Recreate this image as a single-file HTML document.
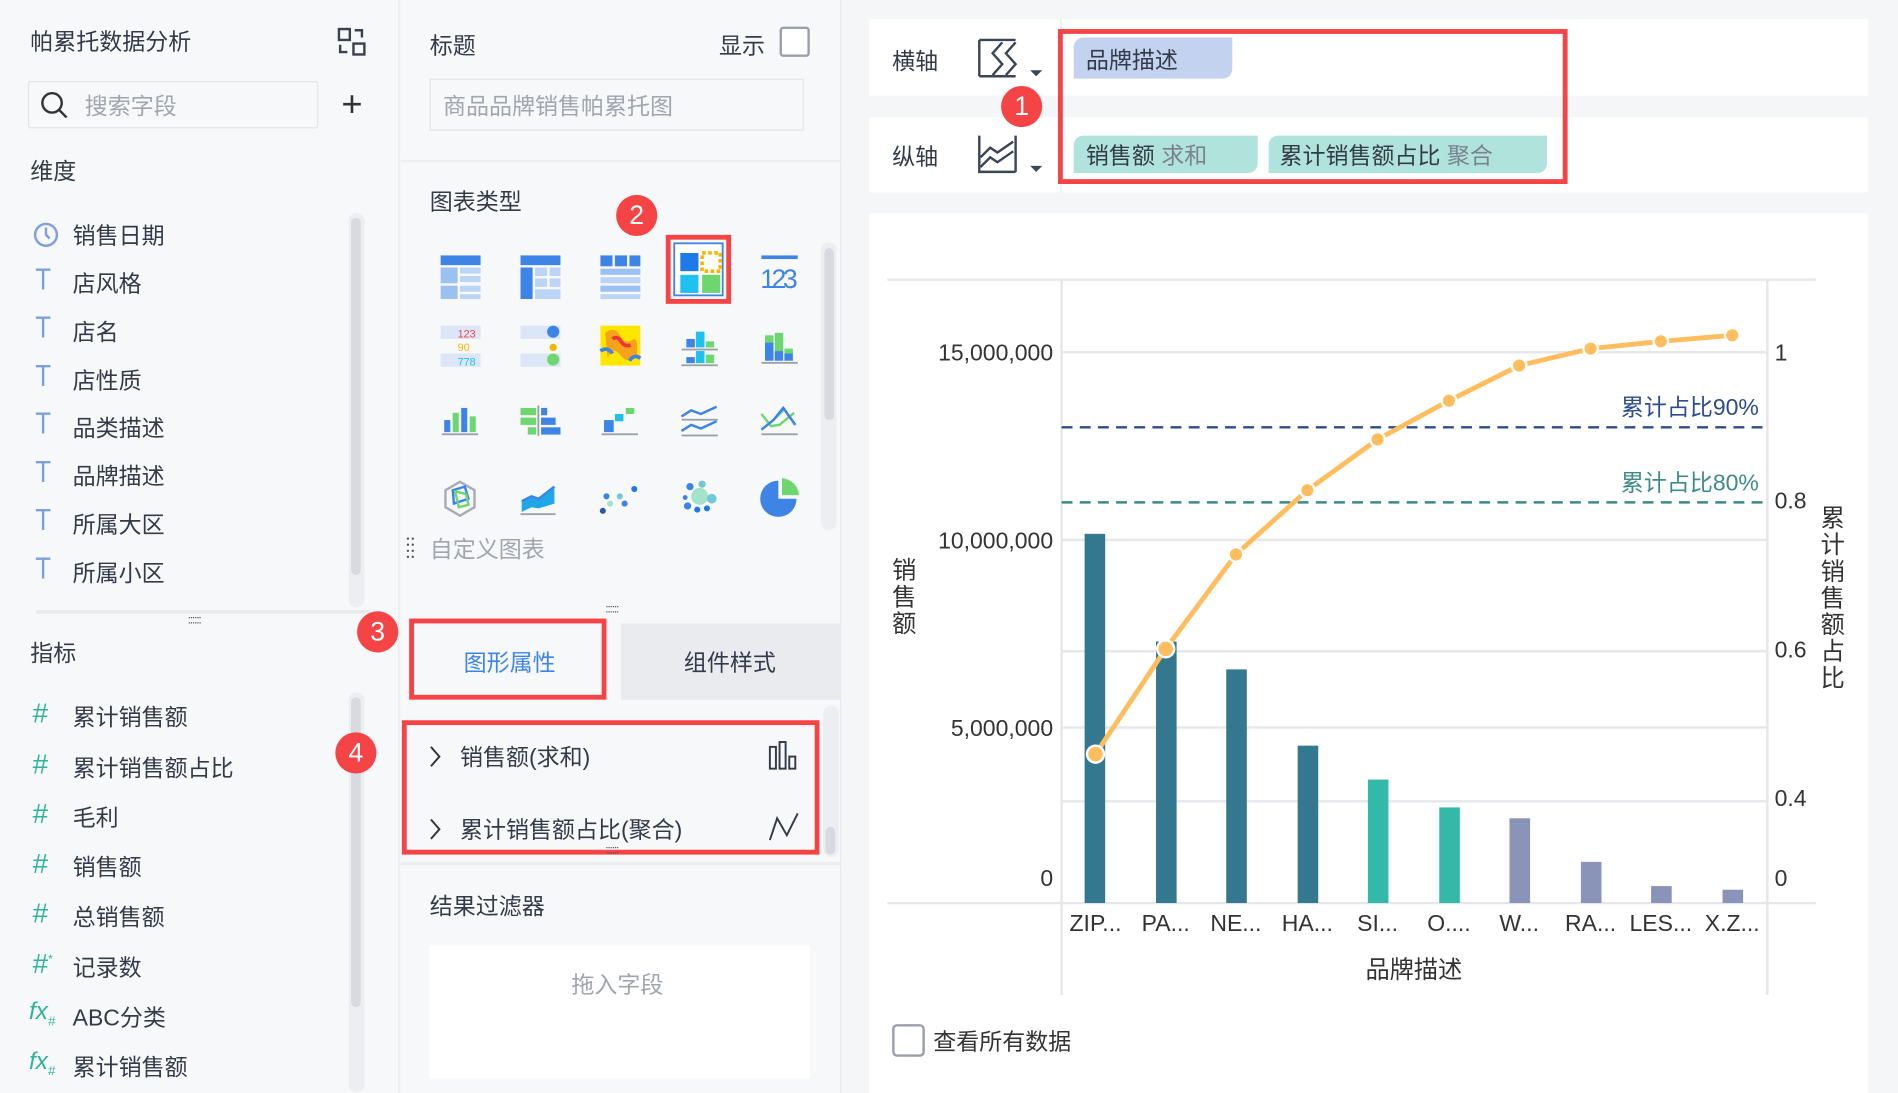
<!DOCTYPE html>
<html><head><meta charset="utf-8"><style>
*{margin:0;padding:0;box-sizing:border-box}
body{width:1898px;height:1093px;overflow:hidden;background:#f5f6f8;font-family:"Liberation Sans","Noto Sans CJK SC",sans-serif;color:#333a48}
#w{width:1568px;height:903px;transform:scale(1.2105);transform-origin:0 0;position:relative}
.a{position:absolute}
.t{font-size:19px;white-space:nowrap;margin-top:-2px}
.badge{position:absolute;width:34px;height:34px;border-radius:50%;background:#f44446;color:#fff;font-size:22px;text-align:center;line-height:34px}
.red{position:absolute;border:4px solid #f44446}
.ic{position:absolute;font-size:25px;color:#7f9ee0;left:28px;margin-top:-4px;transform:scaleX(.85)}
.ih{position:absolute;font-size:23px;color:#2fb39a;left:27px;margin-top:-3px}
</style></head><body><div id="w">
<!-- left panel -->
<div class="a" style="left:0;top:0;width:330px;height:903px;background:#f7f8fa;border-right:1px solid #e6e8eb"></div>
<div class="a t" style="left:25px;top:22px">帕累托数据分析</div>
<svg class="a" style="left:278px;top:22px" width="26" height="26" viewBox="0 0 26 26" fill="none" stroke="#3a4150" stroke-width="2"><rect x="2" y="2" width="9" height="9"/><rect x="14" y="14" width="9" height="9"/><path d="M15 3h6v6M3 15v6h6"/></svg>
<div class="a" style="left:23px;top:67px;width:240px;height:39px;border:1px solid #e2e4e8;border-radius:2px;background:#f7f8fa"></div>
<svg class="a" style="left:32px;top:74px" width="26" height="26" viewBox="0 0 26 26" fill="none" stroke="#333" stroke-width="2"><circle cx="11" cy="11" r="8"/><path d="M17 17l6 6"/></svg>
<div class="a t" style="left:70px;top:75px;color:#a0a5ae">搜索字段</div>
<div class="a" style="left:282px;top:70px;font-size:30px;color:#333;font-weight:300">+</div>
<div class="a t" style="left:25px;top:129px">维度</div>
<div class="a" style="left:288px;top:176px;width:13px;height:326px;border-radius:7px;background:#eceef1"></div>
<div class="a" style="left:290px;top:180px;width:8px;height:295px;border-radius:4px;background:#d8dadf"></div>
<svg class="a" style="left:27px;top:183px" width="22" height="22" viewBox="0 0 22 22" fill="none" stroke="#7f9ee0" stroke-width="2"><circle cx="11" cy="11" r="9"/><path d="M11 5v6l3 3"/></svg>
<div class="a t" style="left:60px;top:182px">销售日期</div>
<div class="ic" style="top:221px">T</div><div class="a t" style="left:60px;top:222px">店风格</div>
<div class="ic" style="top:261px">T</div><div class="a t" style="left:60px;top:262px">店名</div>
<div class="ic" style="top:301px">T</div><div class="a t" style="left:60px;top:302px">店性质</div>
<div class="ic" style="top:340px">T</div><div class="a t" style="left:60px;top:341px">品类描述</div>
<div class="ic" style="top:380px">T</div><div class="a t" style="left:60px;top:381px">品牌描述</div>
<div class="ic" style="top:420px">T</div><div class="a t" style="left:60px;top:421px">所属大区</div>
<div class="ic" style="top:460px">T</div><div class="a t" style="left:60px;top:461px">所属小区</div>
<div class="a" style="left:30px;top:504px;width:276px;height:3px;background:#e8eaed"></div>
<div class="a" style="left:155px;top:507px;font-size:10px;color:#555;letter-spacing:-1px">::::::</div>
<div class="a t" style="left:25px;top:527px">指标</div>
<div class="a" style="left:288px;top:572px;width:13px;height:330px;border-radius:7px;background:#eceef1"></div>
<div class="a" style="left:290px;top:576px;width:8px;height:256px;border-radius:4px;background:#d8dadf"></div>
<div class="ih" style="top:579px">#</div><div class="a t" style="left:60px;top:580px">累计销售额</div>
<div class="ih" style="top:621px">#</div><div class="a t" style="left:60px;top:622px">累计销售额占比</div>
<div class="ih" style="top:662px">#</div><div class="a t" style="left:60px;top:663px">毛利</div>
<div class="ih" style="top:703px">#</div><div class="a t" style="left:60px;top:704px">销售额</div>
<div class="ih" style="top:744px">#</div><div class="a t" style="left:60px;top:745px">总销售额</div>
<div class="ih" style="top:786px">#<sup style="font-size:10px">*</sup></div><div class="a t" style="left:60px;top:787px">记录数</div>
<div class="ih" style="top:828px;left:24px;font-size:20px;font-style:italic">fx<sub style="font-size:11px">#</sub></div><div class="a t" style="left:60px;top:828px">ABC分类</div>
<div class="ih" style="top:869px;left:24px;font-size:20px;font-style:italic">fx<sub style="font-size:11px">#</sub></div><div class="a t" style="left:60px;top:869px">累计销售额</div>

<!-- middle panel -->
<div class="a" style="left:331px;top:0;width:364px;height:903px;background:#f7f8fa;border-right:1px solid #e6e8eb"></div>
<div class="a t" style="left:355px;top:25px">标题</div>
<div class="a t" style="left:594px;top:25px">显示</div>
<div class="a" style="left:644px;top:22px;width:25px;height:25px;border:2px solid #9aa0aa;border-radius:3px;background:#fff"></div>
<div class="a" style="left:355px;top:65px;width:309px;height:43px;border:1px solid #e2e4e8;background:#f7f8fa"></div>
<div class="a t" style="left:366px;top:75px;color:#a0a5ae">商品品牌销售帕累托图</div>
<div class="a" style="left:331px;top:132px;width:364px;height:2px;background:#eceef1"></div>
<div class="a t" style="left:355px;top:154px">图表类型</div>
<div class="a" style="left:678px;top:200px;width:13px;height:238px;border-radius:7px;background:#eceef1"></div>
<div class="a" style="left:681px;top:205px;width:8px;height:142px;border-radius:4px;background:#d8dadf"></div>
<svg class="a" style="left:355px;top:190px" width="320" height="250" viewBox="355 190 320 250">
<rect x="364" y="211" width="33" height="8" fill="#3d84e6"/><rect x="364" y="221" width="14" height="13" fill="#9bc1f3"/><rect x="380" y="221" width="17" height="5" fill="#bcd5f6"/><rect x="380" y="228" width="17" height="5" fill="#bcd5f6"/><rect x="364" y="236" width="14" height="11" fill="#9bc1f3"/><rect x="380" y="236" width="17" height="5" fill="#bcd5f6"/><rect x="380" y="243" width="17" height="4" fill="#bcd5f6"/>
<rect x="430" y="211" width="33" height="8" fill="#3d84e6"/><rect x="430" y="221" width="10" height="26" fill="#3d84e6"/><rect x="442" y="221" width="10" height="7" fill="#bcd5f6"/><rect x="454" y="221" width="9" height="7" fill="#bcd5f6"/><rect x="442" y="230" width="10" height="7" fill="#bcd5f6"/><rect x="454" y="230" width="9" height="7" fill="#bcd5f6"/><rect x="442" y="239" width="21" height="8" fill="#bcd5f6"/>
<rect x="496" y="211" width="10" height="9" fill="#3d84e6"/><rect x="508" y="211" width="10" height="9" fill="#3d84e6"/><rect x="520" y="211" width="9" height="9" fill="#3d84e6"/><rect x="496" y="222" width="33" height="5" fill="#9bc1f3"/><rect x="496" y="229" width="33" height="5" fill="#bcd5f6"/><rect x="496" y="236" width="33" height="5" fill="#9bc1f3"/><rect x="496" y="243" width="33" height="4" fill="#bcd5f6"/>
<rect x="552" y="196" width="50" height="53" fill="none" stroke="#f44446" stroke-width="4"/><rect x="557" y="201" width="40" height="43" fill="#fff" stroke="#3d84e6" stroke-width="1.5"/>
<rect x="562" y="209" width="15" height="15" fill="#1e7ae8"/><rect x="580" y="209" width="15" height="15" fill="none" stroke="#f7b500" stroke-width="3" stroke-dasharray="3 2"/><rect x="562" y="227" width="15" height="15" fill="#1fc1f0"/><rect x="580" y="227" width="15" height="15" fill="#6dd66f"/>
<rect x="629" y="211" width="30" height="3" fill="#3d84e6"/><text x="628" y="238" font-size="22" fill="#3d84e6" font-family="Liberation Sans" textLength="31">123</text>
<rect x="364" y="269" width="33" height="11" fill="#dbe6f6"/><text x="378" y="279" font-size="9" fill="#f44446">123</text><text x="378" y="290" font-size="9" fill="#f7b500">90</text><rect x="364" y="292" width="33" height="11" fill="#dbe6f6"/><text x="378" y="302" font-size="9" fill="#1fc1f0">778</text>
<rect x="430" y="269" width="33" height="11" fill="#dbe6f6"/><circle cx="457" cy="274" r="5" fill="#3d84e6"/><circle cx="457" cy="287" r="3" fill="#f7b500"/><rect x="430" y="292" width="33" height="11" fill="#dbe6f6"/><circle cx="457" cy="297" r="5" fill="#6dd66f"/>
<rect x="496" y="269" width="33" height="33" fill="#ffe600"/><path d="M500 275q8-6 12 2t10 4 4 14q-8 6-14-2t-10 3z" fill="#f7a21b"/><path d="M506 280q4-3 7 2t8 3" stroke="#e33" stroke-width="3" fill="none"/><path d="M496 290q6-4 10 2M520 298q4-6 9-2" stroke="#3d84e6" stroke-width="3" fill="none"/>
<rect x="567" y="280" width="7" height="7" fill="#3d84e6"/><rect x="575" y="274" width="7" height="13" fill="#1fc1f0"/><rect x="583" y="282" width="7" height="5" fill="#6dd66f"/><rect x="563" y="288" width="30" height="1.5" fill="#9aa0aa"/><rect x="567" y="295" width="7" height="5" fill="#3d84e6"/><rect x="575" y="290" width="7" height="10" fill="#1fc1f0"/><rect x="583" y="293" width="7" height="7" fill="#6dd66f"/><rect x="563" y="301" width="30" height="1.5" fill="#9aa0aa"/>
<rect x="632" y="283" width="7" height="15" fill="#3d84e6"/><rect x="632" y="277" width="7" height="6" fill="#6dd66f"/><rect x="640" y="290" width="7" height="8" fill="#3d84e6"/><rect x="640" y="275" width="7" height="15" fill="#6dd66f"/><rect x="648" y="292" width="7" height="6" fill="#3d84e6"/><rect x="648" y="288" width="7" height="4" fill="#6dd66f"/><rect x="629" y="299" width="30" height="1.5" fill="#9aa0aa"/>
<rect x="367" y="347" width="5" height="10" fill="#3d84e6"/><rect x="374" y="341" width="5" height="16" fill="#6dd66f"/><rect x="381" y="337" width="5" height="20" fill="#3d84e6"/><rect x="388" y="344" width="5" height="13" fill="#6dd66f"/><rect x="365" y="358" width="30" height="1.5" fill="#9aa0aa"/>
<rect x="430" y="337" width="13" height="6" fill="#6dd66f"/><rect x="430" y="345" width="13" height="6" fill="#6dd66f"/><rect x="436" y="353" width="7" height="6" fill="#6dd66f"/><rect x="444" y="335" width="1.5" height="25" fill="#9aa0aa"/><rect x="447" y="337" width="5" height="6" fill="#3d84e6"/><rect x="447" y="345" width="12" height="6" fill="#3d84e6"/><rect x="447" y="353" width="16" height="6" fill="#3d84e6"/>
<rect x="499" y="347" width="8" height="10" fill="#3d84e6"/><rect x="508" y="342" width="7" height="6" fill="#1fc1f0"/><rect x="517" y="337" width="7" height="5" fill="#6dd66f"/><rect x="497" y="358" width="30" height="1.5" fill="#9aa0aa"/>
<path d="M563 344l8-5 8 3 13-6M563 356l8-5 8 3 13-6" stroke="#3d84e6" stroke-width="2" fill="none"/><rect x="563" y="346" width="30" height="1.5" fill="#9aa0aa"/><rect x="563" y="359" width="30" height="1.5" fill="#9aa0aa"/>
<path d="M629 342l8 10 7-1 12-10M629 355l12-10 7-7 9 13" stroke-width="2" fill="none" stroke="#6dd66f"/><path d="M629 355l10-8 8-10 10 14" stroke="#3d84e6" stroke-width="2" fill="none"/><rect x="629" y="358" width="30" height="1.5" fill="#9aa0aa"/>
<path d="M380 398l12 7v14l-12 7-12-7v-14z" fill="none" stroke="#a8adb5" stroke-width="2"/><path d="M374 405l10-3 3 10-12 4z" fill="none" stroke="#3d84e6" stroke-width="2"/><path d="M376 406l9 2 2 9-8 2z" fill="none" stroke="#6dd66f" stroke-width="2"/>
<path d="M431 414l8-4 6 2 13-10v14l-13 4-6-1-8 4z" fill="#1fa7e8"/><path d="M431 414l8-4 6 2 13-10" stroke="#3d84e6" stroke-width="2" fill="none"/><rect x="430" y="424" width="29" height="1.5" fill="#9aa0aa"/>
<circle cx="498" cy="422" r="2.5" fill="#2f55a8"/><circle cx="504" cy="416" r="2.5" fill="#a4e2c9"/><circle cx="501" cy="410" r="2.5" fill="#3d84e6"/><circle cx="512" cy="410" r="2.5" fill="#72c8d6"/><circle cx="516" cy="416" r="2.5" fill="#3d84e6"/><circle cx="524" cy="404" r="2.5" fill="#1e7ae8"/>
<circle cx="578" cy="410" r="7" fill="#a4e2c9"/><circle cx="570" cy="402" r="3" fill="#3d84e6"/><circle cx="580" cy="400" r="3" fill="#72c8d6"/><circle cx="588" cy="412" r="4" fill="#72c8d6"/><circle cx="566" cy="411" r="2" fill="#3d84e6"/><circle cx="568" cy="418" r="3" fill="#3d84e6"/><circle cx="576" cy="421" r="2.5" fill="#1e7ae8"/><circle cx="584" cy="420" r="2.5" fill="#1e7ae8"/>
<path d="M643 397a15 15 0 1 0 15 15h-15z" fill="#3d84e6"/><path d="M646 395a15 15 0 0 1 14 14h-14z" fill="#6dd66f"/>
</svg>
<svg class="a" style="left:335px;top:443px" width="8" height="20"><g fill="#555"><circle cx="2" cy="2" r="1"/><circle cx="6" cy="2" r="1"/><circle cx="2" cy="7" r="1"/><circle cx="6" cy="7" r="1"/><circle cx="2" cy="12" r="1"/><circle cx="6" cy="12" r="1"/><circle cx="2" cy="17" r="1"/><circle cx="6" cy="17" r="1"/></g></svg>
<div class="a t" style="left:355px;top:441px;color:#a0a5ae">自定义图表</div>
<div class="a" style="left:500px;top:498px;font-size:10px;color:#555;letter-spacing:-1px">::::::</div>
<div class="a" style="left:513px;top:515px;width:182px;height:63px;background:#eaebef"></div>
<div class="a" style="left:338px;top:511px;width:163px;height:67px;border:4px solid #f44446;background:#f7f8fa"></div>
<div class="a t" style="left:383px;top:535px;color:#3d84e6">图形属性</div>
<div class="a t" style="left:565px;top:535px">组件样式</div>
<div class="a" style="left:680px;top:583px;width:13px;height:125px;border-radius:7px;background:#eceef1"></div>
<div class="a" style="left:682px;top:683px;width:8px;height:23px;border-radius:4px;background:#d8dadf"></div>
<div class="red" style="left:332px;top:595px;width:345px;height:111px"></div>
<svg class="a" style="left:352px;top:614px" width="14" height="22" viewBox="0 0 14 22" fill="none" stroke="#333" stroke-width="1.6"><path d="M4 3l7 8-7 8"/></svg>
<div class="a t" style="left:380px;top:613px">销售额(求和)</div>
<svg class="a" style="left:634px;top:611px" width="28" height="26" viewBox="0 0 28 26" fill="none" stroke="#333a48" stroke-width="1.6"><rect x="2" y="6" width="5" height="18"/><rect x="10" y="2" width="5" height="22"/><rect x="18" y="14" width="5" height="10"/></svg>
<svg class="a" style="left:352px;top:674px" width="14" height="22" viewBox="0 0 14 22" fill="none" stroke="#333" stroke-width="1.6"><path d="M4 3l7 8-7 8"/></svg>
<div class="a t" style="left:380px;top:673px">累计销售额占比(聚合)</div>
<svg class="a" style="left:634px;top:670px" width="28" height="26" viewBox="0 0 28 26" fill="none" stroke="#333a48" stroke-width="1.6"><path d="M2 24l6-18 8 14 9-18"/></svg>
<div class="a" style="left:500px;top:697px;font-size:10px;color:#555;letter-spacing:-1px">::::::</div>
<div class="a" style="left:331px;top:712px;width:364px;height:3px;background:#eceef1"></div>
<div class="a t" style="left:355px;top:736px">结果过滤器</div>
<div class="a" style="left:355px;top:781px;width:314px;height:110px;background:#fff"></div>
<div class="a t" style="left:472px;top:801px;color:#a0a5ae">拖入字段</div>

<!-- right -->
<div class="a" style="left:718px;top:16px;width:825px;height:63px;background:#fff"></div>
<div class="a" style="left:718px;top:97px;width:825px;height:62px;background:#fff"></div>
<div class="a" style="left:876px;top:16px;width:1px;height:143px;background:#e6e8eb"></div>
<div class="a t" style="left:737px;top:38px">横轴</div>
<div class="a t" style="left:737px;top:117px">纵轴</div>
<svg class="a" style="left:806px;top:30px" width="58" height="120" viewBox="0 0 58 120" fill="none" stroke="#3a4558" stroke-width="2"><path d="M3 3v30M3 3h30M3 33h30M22 5l-8 9 8 9-8 9M33 5l-8 9 8 9-8 9"/><path d="M45 28h10l-5 5z" fill="#3a4558" stroke="none"/><path d="M3 82v30h30M33 82v30M4 100l8-8 6 4 13-9M4 108l8-8 6 4 13-9"/><path d="M45 107h10l-5 5z" fill="#3a4558" stroke="none"/></svg>
<div class="badge" style="left:827px;top:71px">1</div>
<div class="red" style="left:874px;top:24px;width:421px;height:128px"></div>
<div class="a" style="left:887px;top:31px;width:131px;height:34px;background:#c3d2ef;border-radius:8px 0 8px 0"></div>
<div class="a t" style="left:897px;top:37px">品牌描述</div>
<div class="a" style="left:887px;top:112px;width:152px;height:31px;background:#afe3dc;border-radius:8px 0 8px 0"></div>
<div class="a t" style="left:897px;top:116px">销售额 <span style="color:#7a8290">求和</span></div>
<div class="a" style="left:1048px;top:112px;width:230px;height:31px;background:#afe3dc;border-radius:8px 0 8px 0"></div>
<div class="a t" style="left:1057px;top:116px">累计销售额占比 <span style="color:#7a8290">聚合</span></div>

<div class="a" style="left:718px;top:176px;width:825px;height:727px;background:#fff"></div>
<svg class="a" style="left:718px;top:176px" width="825" height="727" viewBox="718 176 825 727" font-family="Liberation Sans,Noto Sans CJK SC,sans-serif">
<g stroke="#e6e7ea" stroke-width="2">
<line x1="733" y1="231" x2="1500" y2="231"/><line x1="733" y1="746" x2="1500" y2="746"/>
<line x1="877" y1="291" x2="1460" y2="291"/><line x1="877" y1="446" x2="1460" y2="446"/><line x1="877" y1="538" x2="1460" y2="538"/><line x1="877" y1="601" x2="1460" y2="601"/><line x1="877" y1="662" x2="1460" y2="662"/>
<line x1="877" y1="231" x2="877" y2="822"/><line x1="1460" y1="231" x2="1460" y2="822"/>
</g>
<line x1="877" y1="353" x2="1460" y2="353" stroke="#2b4c8f" stroke-width="2" stroke-dasharray="9 6"/>
<line x1="877" y1="415" x2="1460" y2="415" stroke="#3d8a8a" stroke-width="2" stroke-dasharray="9 6"/>
<text x="1453" y="343" font-size="19" fill="#2b4c8f" text-anchor="end">累计占比90%</text>
<text x="1453" y="405" font-size="19" fill="#3d8a8a" text-anchor="end">累计占比80%</text>
<g font-size="19" fill="#333" text-anchor="end"><text x="870" y="298">15,000,000</text><text x="870" y="453">10,000,000</text><text x="870" y="608">5,000,000</text><text x="870" y="732">0</text></g>
<g font-size="19" fill="#333"><text x="1466" y="298">1</text><text x="1466" y="420">0.8</text><text x="1466" y="543">0.6</text><text x="1466" y="666">0.4</text><text x="1466" y="732">0</text></g>
<g font-size="20" fill="#333"><text x="737" y="478">销</text><text x="737" y="500">售</text><text x="737" y="522">额</text>
<text x="1504" y="435">累</text><text x="1504" y="457">计</text><text x="1504" y="479">销</text><text x="1504" y="501">售</text><text x="1504" y="523">额</text><text x="1504" y="545">占</text><text x="1504" y="567">比</text></g>
<g fill="#33788f"><rect x="896" y="441" width="17" height="305"/><rect x="955" y="530" width="17" height="216"/><rect x="1013" y="553" width="17" height="193"/><rect x="1072" y="616" width="17" height="130"/></g>
<g fill="#34b8a8"><rect x="1130" y="644" width="17" height="102"/><rect x="1189" y="667" width="17" height="79"/></g>
<g fill="#8a93b8"><rect x="1247" y="676" width="17" height="70"/><rect x="1306" y="712" width="17" height="34"/><rect x="1364" y="732" width="17" height="14"/><rect x="1423" y="735" width="17" height="11"/></g>
<polyline points="905,623 963,536 1021,458 1080,405 1138,363 1197,331 1255,302 1314,288 1372,282 1431,277" fill="none" stroke="#ffbd5e" stroke-width="4"/>
<g fill="#ffbd5e" stroke="#fff" stroke-width="2"><circle cx="905" cy="623" r="7"/><circle cx="963" cy="536" r="7"/><circle cx="1021" cy="458" r="6"/><circle cx="1080" cy="405" r="6"/><circle cx="1138" cy="363" r="6"/><circle cx="1197" cy="331" r="6"/><circle cx="1255" cy="302" r="6"/><circle cx="1314" cy="288" r="6"/><circle cx="1372" cy="282" r="6"/><circle cx="1431" cy="277" r="6"/></g>
<g font-size="19" fill="#333" text-anchor="middle"><text x="905" y="769">ZIP...</text><text x="963" y="769">PA...</text><text x="1021" y="769">NE...</text><text x="1080" y="769">HA...</text><text x="1138" y="769">SI...</text><text x="1197" y="769">O....</text><text x="1255" y="769">W...</text><text x="1314" y="769">RA...</text><text x="1372" y="769">LES...</text><text x="1431" y="769">X.Z...</text></g>
<text x="1168" y="808" font-size="20" fill="#333" text-anchor="middle">品牌描述</text>
<rect x="738" y="847" width="25" height="25" rx="3" fill="#fff" stroke="#9aa0aa" stroke-width="2"/>
<text x="771" y="867" font-size="19" fill="#333">查看所有数据</text>
</svg>
<div class="badge" style="left:509px;top:161px">2</div>
<div class="badge" style="left:295px;top:505px">3</div>
<div class="badge" style="left:277px;top:605px">4</div>
</div></body></html>
